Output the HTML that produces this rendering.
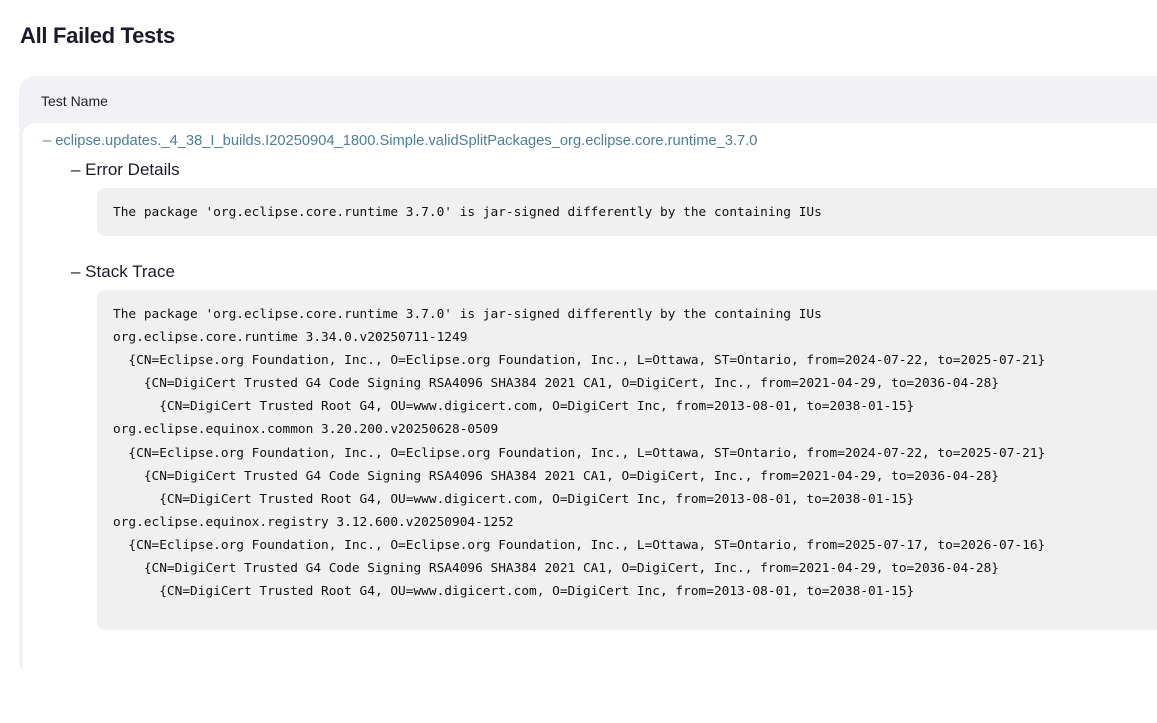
<!DOCTYPE html>
<html><head><meta charset="utf-8"><style>
html,body{margin:0;background:#fff;width:1157px;height:617px;overflow:hidden;font-family:"Liberation Sans",sans-serif;color:#1a1a2a}
h1{position:absolute;left:20px;top:23px;margin:0;font-size:22px;font-weight:bold;letter-spacing:-0.3px}
.card{position:absolute;left:19px;top:76px;width:1200px;height:600px;background:#f2f2f6;border-radius:16px}
.th{position:absolute;left:41px;top:93px;font-size:14px;color:#222}
.inner{position:absolute;left:23px;top:123px;width:1200px;height:600px;background:#fff;border-radius:12px 0 0 0}
.link{position:absolute;left:43px;top:133px;font-size:14.7px;color:#4d7f9a;white-space:nowrap}
.sec{position:absolute;left:71px;font-size:17px;color:#1a1a2a}
.code{position:absolute;left:97px;width:1100px;background:#f0f0f0;border-radius:8px;font-family:"DejaVu Sans Mono","Liberation Mono",monospace;font-size:12.8px;line-height:23.1px;white-space:pre;color:#111;padding-left:16px;box-sizing:border-box}
</style></head><body>
<h1>All Failed Tests</h1>
<div class="card"></div>
<div class="th">Test Name</div>
<div class="inner"></div>
<div class="link">– eclipse.updates._4_38_I_builds.I20250904_1800.Simple.validSplitPackages_org.eclipse.core.runtime_3.7.0</div>
<div class="sec" style="top:160px">– Error Details</div>
<div class="code" style="top:188px;height:48px;padding-top:13px">The package 'org.eclipse.core.runtime 3.7.0' is jar-signed differently by the containing IUs</div>
<div class="sec" style="top:262px">– Stack Trace</div>
<div class="code" style="top:290px;height:340px;padding-top:13px">The package 'org.eclipse.core.runtime 3.7.0' is jar-signed differently by the containing IUs
org.eclipse.core.runtime 3.34.0.v20250711-1249
  {CN=Eclipse.org Foundation, Inc., O=Eclipse.org Foundation, Inc., L=Ottawa, ST=Ontario, from=2024-07-22, to=2025-07-21}
    {CN=DigiCert Trusted G4 Code Signing RSA4096 SHA384 2021 CA1, O=DigiCert, Inc., from=2021-04-29, to=2036-04-28}
      {CN=DigiCert Trusted Root G4, OU=www.digicert.com, O=DigiCert Inc, from=2013-08-01, to=2038-01-15}
org.eclipse.equinox.common 3.20.200.v20250628-0509
  {CN=Eclipse.org Foundation, Inc., O=Eclipse.org Foundation, Inc., L=Ottawa, ST=Ontario, from=2024-07-22, to=2025-07-21}
    {CN=DigiCert Trusted G4 Code Signing RSA4096 SHA384 2021 CA1, O=DigiCert, Inc., from=2021-04-29, to=2036-04-28}
      {CN=DigiCert Trusted Root G4, OU=www.digicert.com, O=DigiCert Inc, from=2013-08-01, to=2038-01-15}
org.eclipse.equinox.registry 3.12.600.v20250904-1252
  {CN=Eclipse.org Foundation, Inc., O=Eclipse.org Foundation, Inc., L=Ottawa, ST=Ontario, from=2025-07-17, to=2026-07-16}
    {CN=DigiCert Trusted G4 Code Signing RSA4096 SHA384 2021 CA1, O=DigiCert, Inc., from=2021-04-29, to=2036-04-28}
      {CN=DigiCert Trusted Root G4, OU=www.digicert.com, O=DigiCert Inc, from=2013-08-01, to=2038-01-15}</div>
</body></html>
